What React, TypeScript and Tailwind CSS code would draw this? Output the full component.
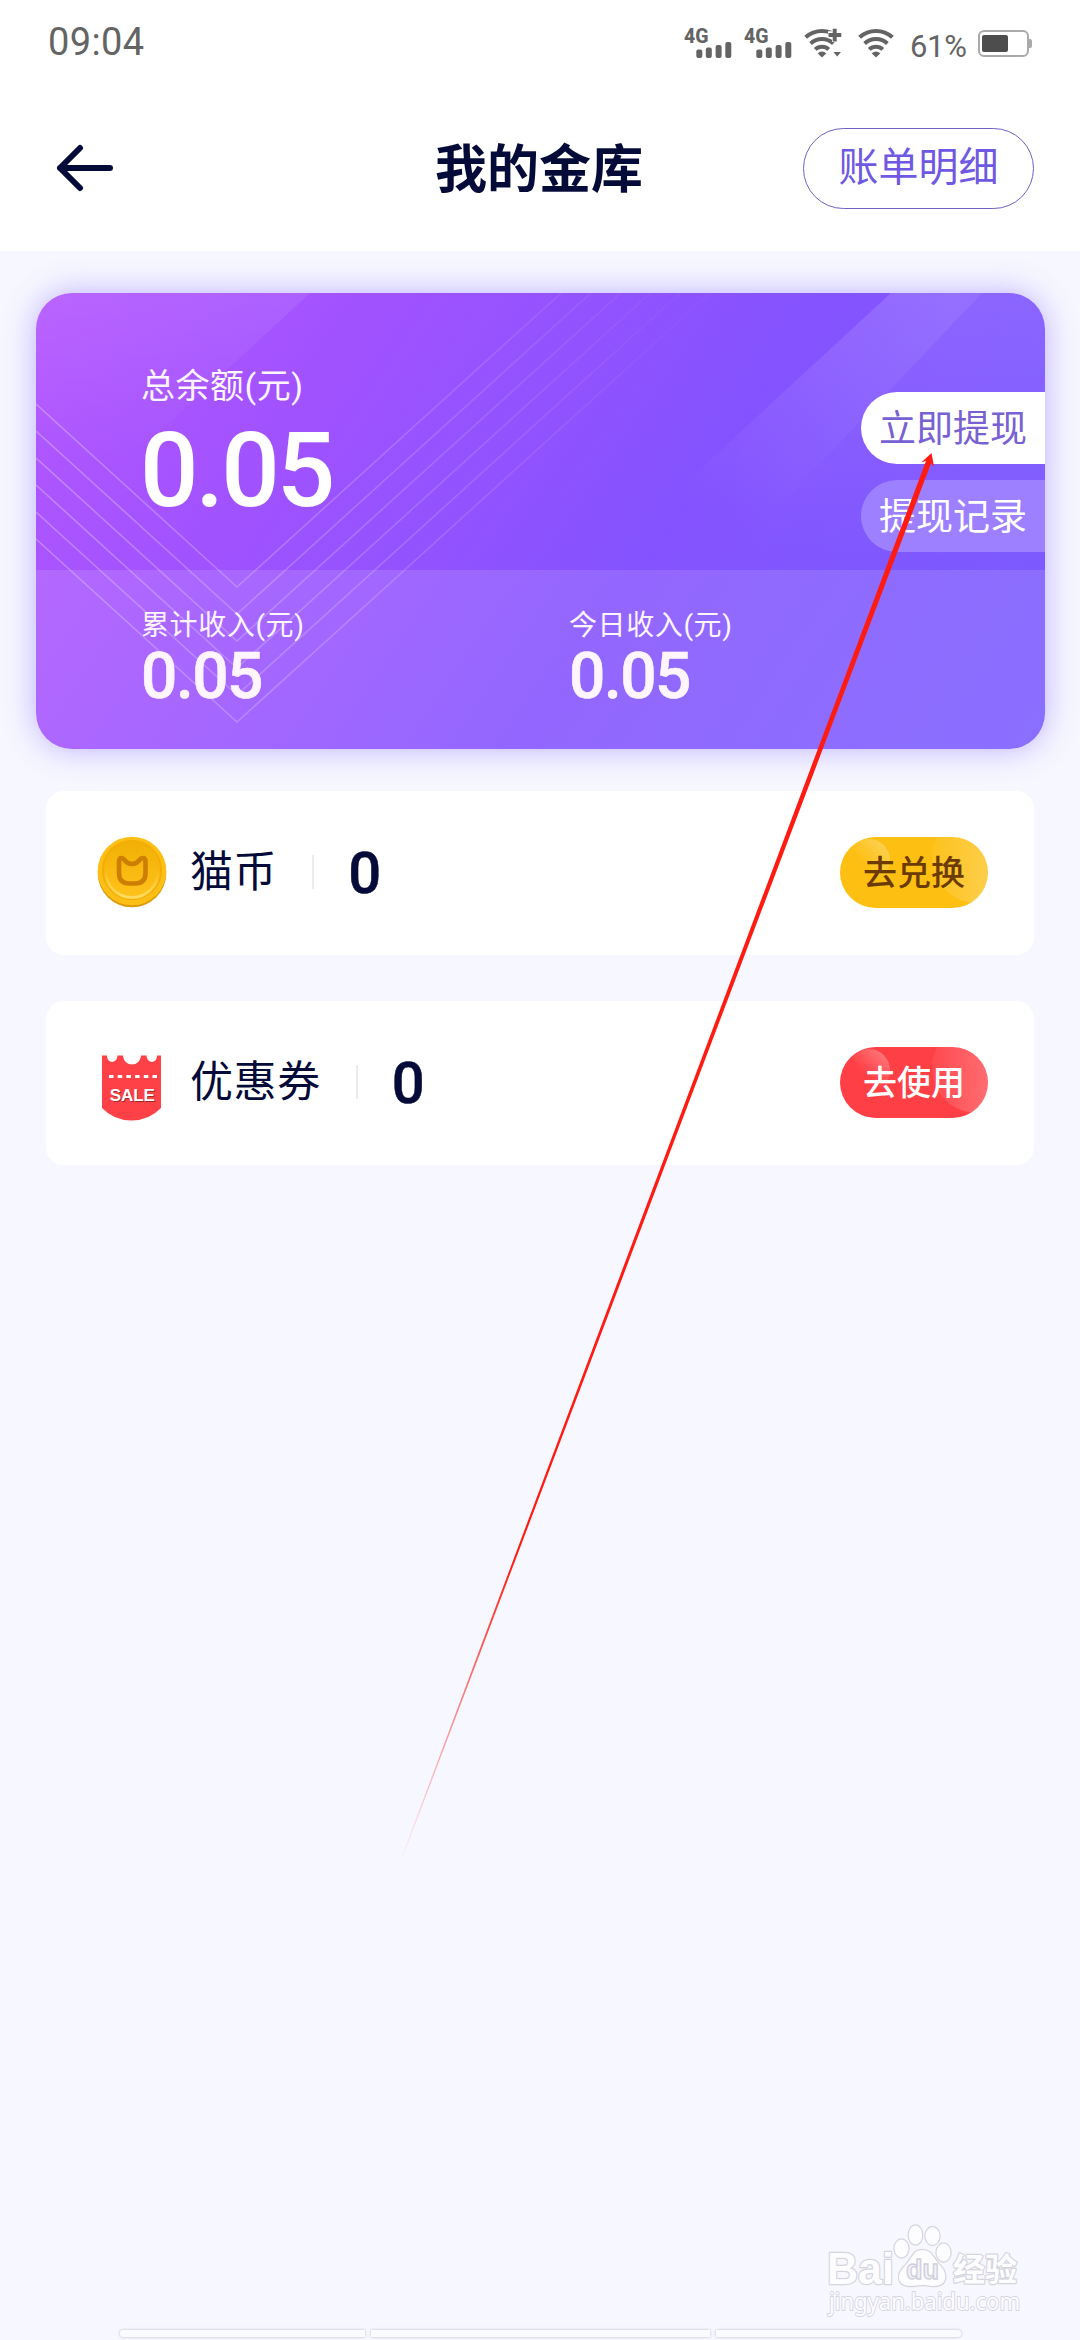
import React from "react";

const CJK = "font-['Roboto','Noto_Sans_CJK_SC',sans-serif]";

function Signal() {
  return (
    <svg className="h-[34px] w-[50px] overflow-visible" viewBox="0 0 50 34" fill="#646464">
      <text x="0" y="18" fontSize="21" fontWeight="800" fontFamily="Roboto, sans-serif" textLength="24.500" lengthAdjust="spacingAndGlyphs">
        4G
      </text>
      <rect x="12.3" y="24.5" width="6" height="8.5" rx="2" />
      <rect x="21.8" y="22.5" width="6" height="10.5" rx="2" />
      <rect x="31.6" y="20" width="6" height="13" rx="2" />
      <rect x="41.3" y="17" width="6" height="16" rx="2" />
    </svg>
  );
}

function Wifi({ plus }: { plus?: boolean }) {
  return (
    <svg className="h-[34px] w-[40px]" viewBox="0 0 40 34" fill="none" stroke="#646464" strokeWidth="4">
      <path d="M1.6 12.2 A24.5 24.5 0 0 1 34.4 12.2" />
      <path d="M6.6 18.4 A17 17 0 0 1 29.4 18.4" />
      <path d="M11.2 24.4 A10 10 0 0 1 24.8 24.4" />
      <path d="M13.6 28.2 Q18 24.6 22.4 28.2 L18 32.4 Z" fill="#646464" stroke="none" />
      {plus && (
        <>
          <path d="M31.5 2V17M24 9.7H39" stroke="#fff" strokeWidth="7" />
          <path d="M30.7 3.8V16.4M24.5 10H37.3" strokeWidth="4" />
          <path d="M29.5 27H37L33.2 31.6Z" fill="#646464" stroke="none" />
        </>
      )}
    </svg>
  );
}

function Coin() {
  return (
    <svg className="h-[72px] w-[70px] shrink-0" viewBox="0 0 70 72">
      <defs>
        <linearGradient id="coinFace" x1="0" y1="0" x2="0" y2="1">
          <stop offset="0" stopColor="#f2b004" />
          <stop offset="1" stopColor="#ffc21c" />
        </linearGradient>
        <linearGradient id="coinShine" x1="0" y1="0" x2="0" y2="1">
          <stop offset="0.5" stopColor="#ffdc60" stopOpacity="0" />
          <stop offset="1" stopColor="#ffdc60" />
        </linearGradient>
      </defs>
      <ellipse cx="35" cy="37" rx="34.3" ry="34.3" fill="#dd9a06" />
      <ellipse cx="35" cy="35" rx="34.3" ry="34.3" fill="#fdbf16" />
      <circle cx="35" cy="34" r="29" fill="url(#coinFace)" stroke="#f3ad04" strokeWidth="2" />
      <circle cx="35" cy="35" r="26.5" fill="none" stroke="url(#coinShine)" strokeWidth="3" />
      <path
        d="M22 26 Q22 20.500 26 22.500 L30 26.500 Q35 29.500 40 26.500 L44 22.500 Q48.500 20.500 48.500 26 V37 Q48.500 47.500 38 47.500 H32.500 Q22 47.500 22 37 Z"
        fill="none"
        stroke="#cd7f04"
        strokeWidth="4.6"
        strokeLinejoin="round"
      />
    </svg>
  );
}

function Ticket() {
  return (
    <svg className="h-[72px] w-[70px] shrink-0 translate-y-[7px]" viewBox="0 0 70 72">
      <path
        d="M5 2.500 H10 C10 11 20 11 20.500 2.500 H26 C27 14.500 43 14.500 44 2.500 H49.500 C50 11 60 11 60 2.500 H64 V55 Q52 67.500 34.500 67.500 Q17 67.500 5 55 Z"
        fill="#fe4147"
      />
      <path d="M12 23.500H61" stroke="#fff" strokeWidth="3" strokeDasharray="4.500 4.200" />
      <text x="13.500" y="49" fontSize="17" fontWeight="700" fontFamily="Liberation Sans, sans-serif" fill="#9c2b2e" textLength="45">
        SALE
      </text>
      <text x="12.800" y="48" fontSize="17" fontWeight="700" fontFamily="Liberation Sans, sans-serif" fill="#fff" textLength="45">
        SALE
      </text>
    </svg>
  );
}

function CardArt() {
  const apexes = [294, 321, 348, 375, 402, 429];
  return (
    <svg className="absolute inset-0 h-full w-full" viewBox="0 0 1009 456">
      <defs>
        <linearGradient id="cornerGlow" gradientUnits="userSpaceOnUse" x1="100" y1="0" x2="100" y2="170">
          <stop offset="0" stopColor="#fff" stopOpacity="0.080" />
          <stop offset="1" stopColor="#fff" stopOpacity="0" />
        </linearGradient>
        <linearGradient id="beam" gradientUnits="userSpaceOnUse" x1="900" y1="0" x2="690" y2="240">
          <stop offset="0" stopColor="#fff" stopOpacity="0.150" />
          <stop offset="1" stopColor="#fff" stopOpacity="0" />
        </linearGradient>
        <linearGradient id="side" x1="0" y1="0" x2="0" y2="1">
          <stop offset="0" stopColor="#fff" stopOpacity="0.090" />
          <stop offset="1" stopColor="#fff" stopOpacity="0" />
        </linearGradient>
        <linearGradient id="lines" gradientUnits="userSpaceOnUse" x1="0" y1="0" x2="640" y2="0">
          <stop offset="0" stopColor="#fff" stopOpacity="0.280" />
          <stop offset="0.500" stopColor="#fff" stopOpacity="0.180" />
          <stop offset="1" stopColor="#fff" stopOpacity="0.020" />
        </linearGradient>
      </defs>
      <path d="M0 0H274L90 170H0Z" fill="url(#cornerGlow)" />
      <path d="M855 0H946L740 217L690 277H555Z" fill="url(#beam)" />
      <path d="M946 0H1009V277H690L740 217Z" fill="url(#side)" />
      <rect y="277" width="1009" height="179" fill="#fff" fillOpacity="0.120" />
      {apexes.map((y) => (
        <path
          key={y}
          d={`M0 ${y - 183} L201 ${y} L${201 + y / 0.907} 0`}
          fill="none"
          stroke="url(#lines)"
          strokeWidth="1.600"
        />
      ))}
    </svg>
  );
}

function Stat({ label }: { label: string }) {
  return (
    <div>
      <div className="h-[34px] text-[28px] leading-[36px] tracking-[0.6px]">{label}</div>
      <div className="mt-1 h-[60px] text-[64px] font-medium leading-[61px] tracking-[-1.5px] [-webkit-text-stroke:0.6px]">0.05</div>
    </div>
  );
}

interface RowProps {
  icon: React.ReactNode;
  label: string;
  action: string;
  tone: string;
  glow: string;
}

function Row({ icon, label, action, tone, glow }: RowProps) {
  return (
    <div className="flex h-[164px] items-center rounded-[18px] bg-white pb-[2px] pl-[51px] pr-[46px]">
      {icon}
      <span className="ml-[23px] text-[43px] leading-[60px] tracking-[0.6px] text-[#050b38]">{label}</span>
      <span className="ml-[35px] h-[34px] w-[2px] bg-[#ebebf0]" />
      <span className="ml-[34px] mt-[2px] text-[58px] font-medium leading-[60px] text-[#050b38] [-webkit-text-stroke:0.5px]">0</span>
      <button
        className={`relative ml-auto flex h-[71px] w-[148px] items-center justify-center overflow-hidden rounded-full text-[34px] font-medium ${tone}`}
      >
        <span className={`absolute left-[8px] top-[2px] size-[42px] rounded-full bg-linear-to-tr from-white/0 from-40% ${glow}`} />
        <span className={`absolute -top-[24px] left-[92px] size-[90px] rounded-full bg-linear-to-r from-white/5 ${glow}`} />
        <span className="relative pt-[3px]">{action}</span>
      </button>
    </div>
  );
}

function Pointer() {
  return (
    <svg className="pointer-events-none absolute left-0 top-0 h-[2340px] w-[1080px]" viewBox="0 0 1080 2340">
      <defs>
        <linearGradient id="tail" gradientUnits="userSpaceOnUse" x1="400" y1="1863" x2="515" y2="1560">
          <stop offset="0" stopColor="#fe1c12" stopOpacity="0" />
          <stop offset="1" stopColor="#fe1c12" />
        </linearGradient>
      </defs>
      <path d="M931.500 453L934 466.500L931 463.500L400.500 1863.200L399.500 1862.800L926 461L921.500 462.200Z" fill="url(#tail)" />
    </svg>
  );
}

function Watermark() {
  return (
    <svg className="absolute left-[820px] top-[2216px] h-[104px] w-[212px]" viewBox="0 0 212 104">
      <g fill="#fdfdff" stroke="#d5d5de" strokeWidth="2.400" paintOrder="stroke" strokeLinejoin="round">
        <text x="7" y="68" fontSize="44" fontWeight="700" fontFamily="Liberation Sans, sans-serif" textLength="67" lengthAdjust="spacingAndGlyphs">
          Bai
        </text>
        <ellipse cx="81.500" cy="32.500" rx="7" ry="9" />
        <ellipse cx="95.500" cy="19" rx="6.700" ry="9.500" />
        <ellipse cx="112.500" cy="20" rx="7" ry="9" />
        <ellipse cx="123.500" cy="36.500" rx="7" ry="9" />
        <path d="M102 34 C112 34 113 42 119 48 C129 58 127 70 114 70 C108 70 106 69 102 69 C98 69 95 70 90 70 C77 70 76 58 85 50 C92 43 93 34 102 34Z" />
        <text x="133" y="65" fontSize="32" fontWeight="700" fontFamily="Noto Sans CJK SC, sans-serif">
          经验
        </text>
        <text x="9" y="94" fontSize="23" fontFamily="Noto Sans, sans-serif" strokeWidth="1.800" textLength="191" lengthAdjust="spacingAndGlyphs">
          jingyan.baidu.com
        </text>
      </g>
      <text x="86" y="63" fontSize="27" fontWeight="700" fontFamily="Liberation Sans, sans-serif" fill="#f0f0f8" stroke="#cfcfd9" strokeWidth="1.300">
        du
      </text>
    </svg>
  );
}

export default function App() {
  return (
    <div className={`relative flex h-[2340px] w-[1080px] flex-col overflow-hidden bg-[#f7f7ff] ${CJK}`}>
      <header className="h-[251px] bg-white">
        <div className="flex h-[84px] items-center justify-between pl-[48px] pr-[48px] text-[#646464]">
          <span className="text-[38px] leading-[86px] tracking-[0.4px]">09:04</span>
          <div className="flex items-center">
            <Signal />
            <span className="w-[10px]" />
            <Signal />
            <span className="w-[10px]" />
            <Wifi plus />
            <span className="w-[14px]" />
            <Wifi />
            <span className="ml-[12px] mt-[9px] w-[60px] text-[31px] leading-[40px] tracking-[-0.3px]">61%</span>
            <span className="ml-[8px] mt-[3px] flex h-[27px] w-[51px] items-center rounded-[6px] border-2 border-[#aaaaaa] pl-[2px]">
              <span className="h-[17px] w-[26px] rounded-[2px] bg-[#4d4d4d]" />
            </span>
            <span className="mt-[3px] h-[9px] w-[3px] rounded-r-[2px] bg-[#aaaaaa]" />
          </div>
        </div>
        <div className="grid h-[168px] grid-cols-[1fr_auto_1fr] items-center pl-[56px] pr-[46px]">
          <svg className="h-[48px] w-[58px]" viewBox="0 0 58 48" fill="none" stroke="#050b38" strokeWidth="6" strokeLinecap="round" strokeLinejoin="round">
            <path d="M24 4L4 24L24 44M4 24H54" />
          </svg>
          <h1 className="-ml-[12px] pt-[5px] text-[52px] font-bold leading-[60px] text-[#050b38]">我的金库</h1>
          <button className="h-[81px] w-[231px] justify-self-end rounded-full border-[1.500px] border-[#7361c4] text-[40px] leading-[74px] text-[#7059e2]">
            账单明细
          </button>
        </div>
      </header>

      <section className="relative ml-[36px] mt-[42px] h-[456px] w-[1009px] shrink-0 rounded-[36px] shadow-[0_0_32px_rgba(120,90,255,0.45)]">
        <div className="relative h-full overflow-hidden rounded-[36px] bg-[linear-gradient(124deg,#b457ff_0%,#9f52ff_28%,#8453ff_60%,#7a5cff_100%)] text-[#fff5ff]">
          <CardArt />
          <div className="relative flex h-[277px] justify-between pl-[105px] pt-[72px]">
            <div>
              <div className="h-[40px] text-[34px] leading-[42px] tracking-[0.5px]">总余额(元)</div>
              <div className="-ml-px mt-[14px] h-[100px] text-[103px] font-medium leading-[104px] tracking-[-3px] text-white">0.05</div>
            </div>
            <div className="mt-[26.500px] flex w-[184px] flex-col gap-4 text-[37px]">
              <button className="h-[72px] rounded-l-full bg-white pl-[18px] text-left leading-[75px] text-[#7861d2]">立即提现</button>
              <button className="h-[72px] rounded-l-full bg-[#9d80ff] pl-[18px] text-left leading-[75px] text-white">提现记录</button>
            </div>
          </div>
          <div className="relative grid grid-cols-[428px_1fr] pl-[105px] pt-[38px]">
            <Stat label="累计收入(元)" />
            <Stat label="今日收入(元)" />
          </div>
        </div>
      </section>

      <main className="ml-[46px] mt-[42px] flex w-[988px] flex-col gap-[46px]">
        <Row icon={<Coin />} label="猫币" action="去兑换" tone="bg-[#fdbf12] text-[#6b3b02]" glow="to-white/35" />
        <Row icon={<Ticket />} label="优惠券" action="去使用" tone="bg-[#fe4046] text-white" glow="to-white/35" />
      </main>

      <footer className="mb-[3px] ml-[120px] mt-auto flex gap-[6px]">
        <span className="h-[7px] w-[245px] rounded-l-[3px] bg-[#fafbff] shadow-[0_0_3px_#b8b8c4]" />
        <span className="h-[7px] w-[339px] bg-[#fafbff] shadow-[0_0_3px_#b8b8c4]" />
        <span className="h-[7px] w-[245px] rounded-r-[3px] bg-[#fafbff] shadow-[0_0_3px_#b8b8c4]" />
      </footer>

      <Watermark />
      <Pointer />
    </div>
  );
}
